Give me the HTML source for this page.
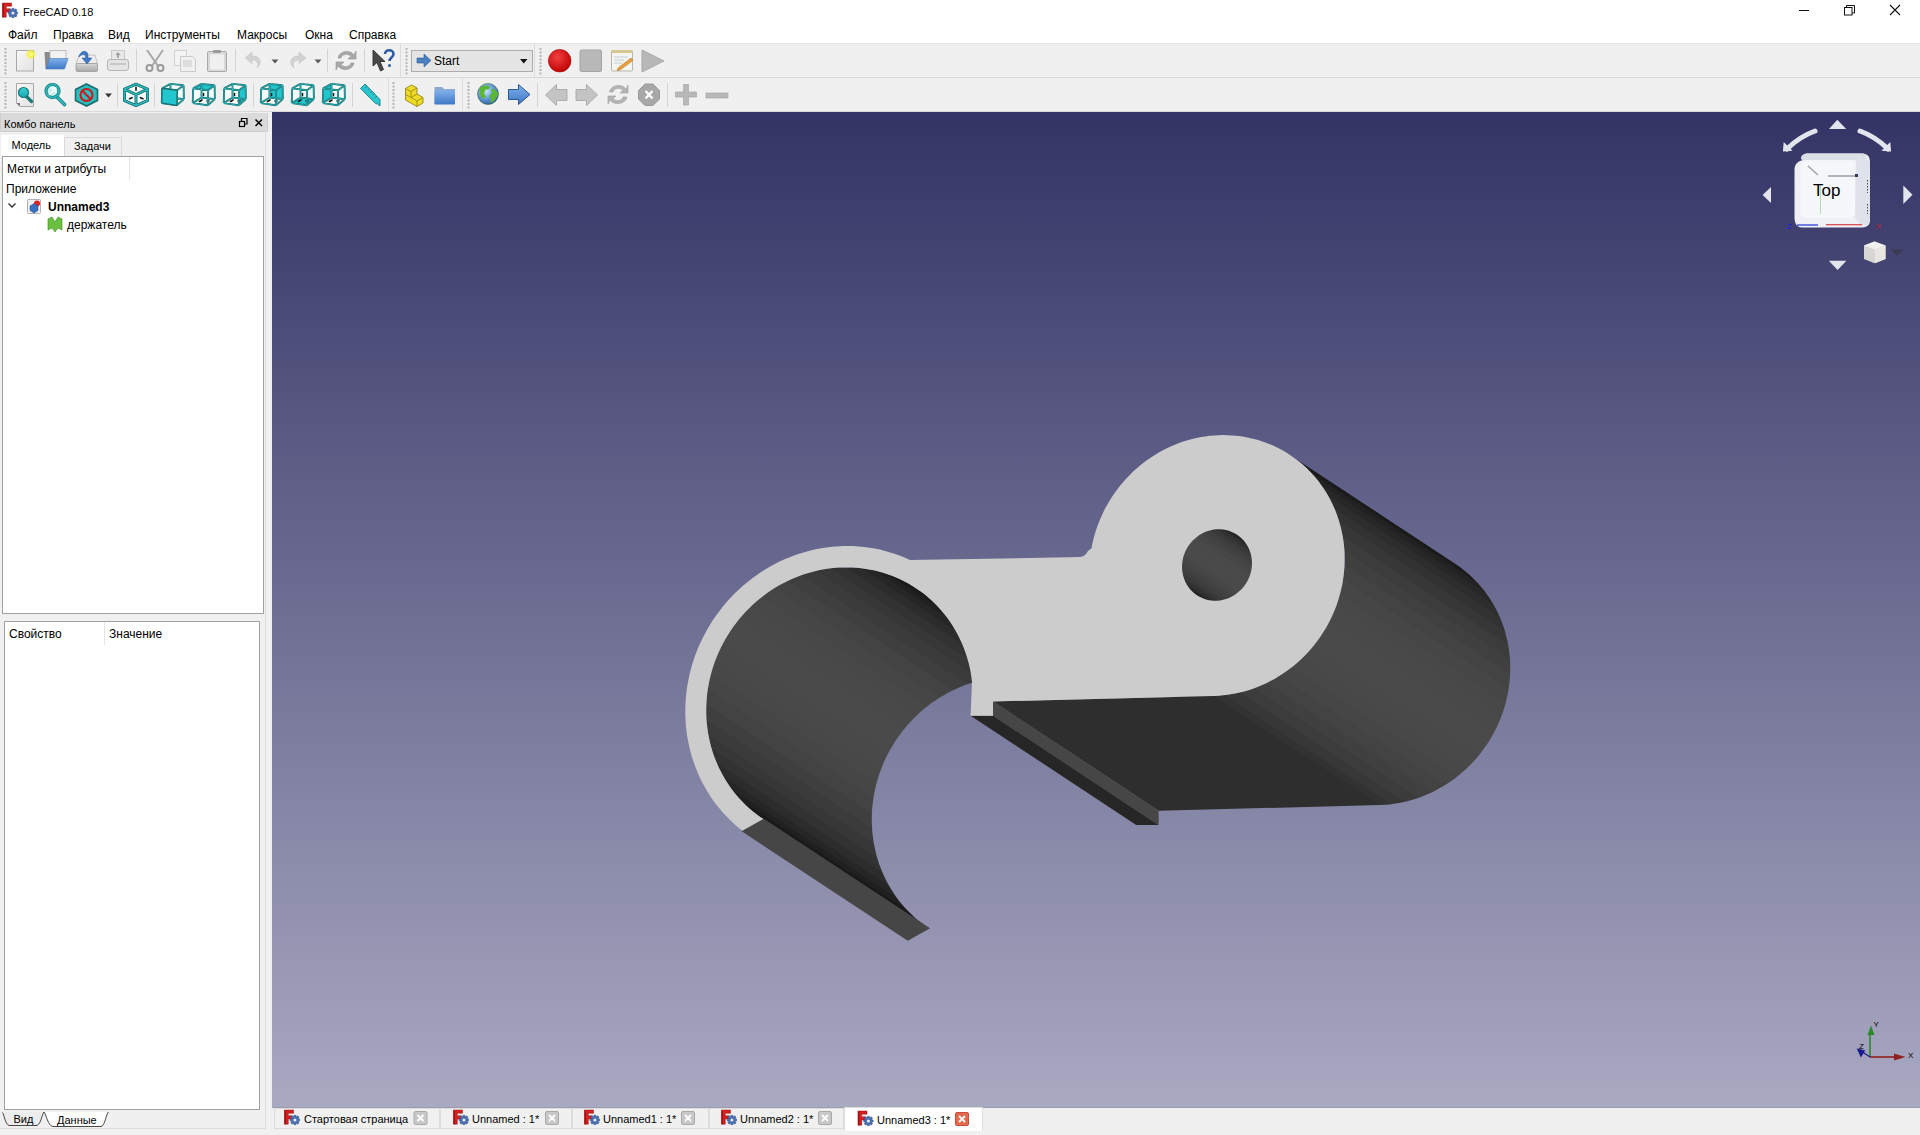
<!DOCTYPE html>
<html><head><meta charset="utf-8">
<style>
*{box-sizing:border-box;margin:0;padding:0}
html,body{width:1920px;height:1135px;overflow:hidden;background:#f0f0f0;font-family:"Liberation Sans",sans-serif;font-size:12px;color:#000}
.abs{position:absolute}
#title{left:0;top:0;width:1920px;height:43px;background:#fff}
.menu{position:absolute;top:27.5px;font-size:12px;line-height:14px;white-space:pre}
#tb{left:0;top:43px;width:1920px;height:69px;background:#f0f0f0}
.hl{position:absolute;height:1px}
.vl{position:absolute;width:1px}
.grip{position:absolute;width:3px;background:repeating-linear-gradient(#a8a8a8 0 2px,transparent 2px 4px)}
#vp{left:272px;top:112px;width:1648px;height:996px;background:linear-gradient(#333365,#a9a9c2)}
.txt{position:absolute;white-space:pre;line-height:14px}
.tab{position:absolute;top:1108px;height:20px;border:1px solid #dcdcdc;border-bottom:none;background:#f0f0f0}
</style></head><body>
<div id="title" class="abs"></div>
<div class="txt" style="left:23px;top:4.5px;font-size:11px">FreeCAD 0.18</div>
<div class="menu" style="left:8px">Файл</div>
<div class="menu" style="left:53px">Правка</div>
<div class="menu" style="left:108px">Вид</div>
<div class="menu" style="left:145px">Инструменты</div>
<div class="menu" style="left:237px">Макросы</div>
<div class="menu" style="left:305px">Окна</div>
<div class="menu" style="left:349px">Справка</div>

<div id="tb" class="abs"></div>
<div class="hl" style="left:0;top:43px;width:1920px;background:#e3e3e3"></div>
<div class="hl" style="left:0;top:77px;width:1920px;background:#d8d8d8"></div>
<div class="hl" style="left:0;top:111px;width:1920px;background:#d8d8d8"></div>

<svg width="1920" height="70" viewBox="0 42 1920 70" style="position:absolute;left:0;top:42px">
<defs><linearGradient id="gpage" x1="0" y1="0" x2="1" y2="1"><stop offset="0" stop-color="#f8f8f8"/><stop offset="1" stop-color="#e2e2e2"/></linearGradient><radialGradient id="gglow"><stop offset="0" stop-color="#ffffc0"/><stop offset="0.5" stop-color="#f4f040"/><stop offset="1" stop-color="#f4f040" stop-opacity="0"/></radialGradient><linearGradient id="gblue" x1="0" y1="0" x2="0" y2="1"><stop offset="0" stop-color="#7fb0ea"/><stop offset="1" stop-color="#3f78c8"/></linearGradient><linearGradient id="ggray" x1="0" y1="0" x2="0" y2="1"><stop offset="0" stop-color="#d8d8d8"/><stop offset="1" stop-color="#a8a8a8"/></linearGradient><radialGradient id="gred" cx="0.4" cy="0.35" r="0.7"><stop offset="0" stop-color="#f04040"/><stop offset="1" stop-color="#c00000"/></radialGradient><radialGradient id="gglobe" cx="0.4" cy="0.35" r="0.7"><stop offset="0" stop-color="#d0e8ff"/><stop offset="0.5" stop-color="#6aa0e0"/><stop offset="1" stop-color="#2a5aa0"/></radialGradient><linearGradient id="gteal" x1="0" y1="0" x2="0" y2="1"><stop offset="0" stop-color="#3ad0d8"/><stop offset="1" stop-color="#18a8b0"/></linearGradient></defs>
<rect x="4.5" y="48" width="2" height="2" fill="#b4b4b4"/><rect x="4.5" y="51.5" width="2" height="2" fill="#b4b4b4"/><rect x="4.5" y="55.0" width="2" height="2" fill="#b4b4b4"/><rect x="4.5" y="58.5" width="2" height="2" fill="#b4b4b4"/><rect x="4.5" y="62.0" width="2" height="2" fill="#b4b4b4"/><rect x="4.5" y="65.5" width="2" height="2" fill="#b4b4b4"/><rect x="4.5" y="69.0" width="2" height="2" fill="#b4b4b4"/><rect x="4.5" y="72.5" width="2" height="2" fill="#b4b4b4"/>
<rect x="4.5" y="82" width="2" height="2" fill="#b4b4b4"/><rect x="4.5" y="85.5" width="2" height="2" fill="#b4b4b4"/><rect x="4.5" y="89.0" width="2" height="2" fill="#b4b4b4"/><rect x="4.5" y="92.5" width="2" height="2" fill="#b4b4b4"/><rect x="4.5" y="96.0" width="2" height="2" fill="#b4b4b4"/><rect x="4.5" y="99.5" width="2" height="2" fill="#b4b4b4"/><rect x="4.5" y="103.0" width="2" height="2" fill="#b4b4b4"/><rect x="4.5" y="106.5" width="2" height="2" fill="#b4b4b4"/>
<rect x="405.5" y="48" width="2" height="2" fill="#b4b4b4"/><rect x="405.5" y="51.5" width="2" height="2" fill="#b4b4b4"/><rect x="405.5" y="55.0" width="2" height="2" fill="#b4b4b4"/><rect x="405.5" y="58.5" width="2" height="2" fill="#b4b4b4"/><rect x="405.5" y="62.0" width="2" height="2" fill="#b4b4b4"/><rect x="405.5" y="65.5" width="2" height="2" fill="#b4b4b4"/><rect x="405.5" y="69.0" width="2" height="2" fill="#b4b4b4"/><rect x="405.5" y="72.5" width="2" height="2" fill="#b4b4b4"/>
<rect x="539.5" y="48" width="2" height="2" fill="#b4b4b4"/><rect x="539.5" y="51.5" width="2" height="2" fill="#b4b4b4"/><rect x="539.5" y="55.0" width="2" height="2" fill="#b4b4b4"/><rect x="539.5" y="58.5" width="2" height="2" fill="#b4b4b4"/><rect x="539.5" y="62.0" width="2" height="2" fill="#b4b4b4"/><rect x="539.5" y="65.5" width="2" height="2" fill="#b4b4b4"/><rect x="539.5" y="69.0" width="2" height="2" fill="#b4b4b4"/><rect x="539.5" y="72.5" width="2" height="2" fill="#b4b4b4"/>
<rect x="392.5" y="82" width="2" height="2" fill="#b4b4b4"/><rect x="392.5" y="85.5" width="2" height="2" fill="#b4b4b4"/><rect x="392.5" y="89.0" width="2" height="2" fill="#b4b4b4"/><rect x="392.5" y="92.5" width="2" height="2" fill="#b4b4b4"/><rect x="392.5" y="96.0" width="2" height="2" fill="#b4b4b4"/><rect x="392.5" y="99.5" width="2" height="2" fill="#b4b4b4"/><rect x="392.5" y="103.0" width="2" height="2" fill="#b4b4b4"/><rect x="392.5" y="106.5" width="2" height="2" fill="#b4b4b4"/>
<rect x="467.5" y="82" width="2" height="2" fill="#b4b4b4"/><rect x="467.5" y="85.5" width="2" height="2" fill="#b4b4b4"/><rect x="467.5" y="89.0" width="2" height="2" fill="#b4b4b4"/><rect x="467.5" y="92.5" width="2" height="2" fill="#b4b4b4"/><rect x="467.5" y="96.0" width="2" height="2" fill="#b4b4b4"/><rect x="467.5" y="99.5" width="2" height="2" fill="#b4b4b4"/><rect x="467.5" y="103.0" width="2" height="2" fill="#b4b4b4"/><rect x="467.5" y="106.5" width="2" height="2" fill="#b4b4b4"/>
<rect x="400" y="44" width="1" height="33" fill="#dcdcdc"/>
<rect x="534" y="44" width="1" height="33" fill="#dcdcdc"/>
<rect x="388" y="78" width="1" height="33" fill="#dcdcdc"/>
<rect x="462" y="78" width="1" height="33" fill="#dcdcdc"/>
<rect x="136" y="49" width="1" height="23" fill="#d4d4d4"/>
<rect x="235" y="49" width="1" height="23" fill="#d4d4d4"/>
<rect x="327" y="49" width="1" height="23" fill="#d4d4d4"/>
<rect x="364" y="49" width="1" height="23" fill="#d4d4d4"/>
<rect x="117" y="83" width="1" height="24" fill="#d4d4d4"/>
<rect x="154" y="83" width="1" height="24" fill="#d4d4d4"/>
<rect x="253" y="83" width="1" height="24" fill="#d4d4d4"/>
<rect x="352" y="83" width="1" height="24" fill="#d4d4d4"/>
<rect x="537" y="83" width="1" height="24" fill="#d4d4d4"/>
<rect x="667" y="83" width="1" height="24" fill="#d4d4d4"/>
<rect x="16.5" y="50.5" width="17" height="20.5" fill="url(#gpage)" stroke="#a8a8a8"/>
<circle cx="30.8" cy="54.3" r="5.5" fill="url(#gglow)"/>
<path d="M44.5,52 h5 l1,2 v15 h-5 z" fill="#8a8a8a"/>
<rect x="50" y="50.5" width="16" height="9" fill="#f2f2f2" stroke="#b0b0b0" stroke-width="0.8"/>
<path d="M49.5,58.5 H68 L64.5,69 H46 Z" fill="url(#gblue)" stroke="#4a78b8" stroke-width="0.6"/>
<path d="M79,55 H95 L97.5,64 H76 Z" fill="#ececec" stroke="#b8b8b8" stroke-width="0.8"/>
<rect x="76" y="63.5" width="21.5" height="8" rx="1.5" fill="url(#ggray)" stroke="#9a9a9a" stroke-width="0.8"/>
<path d="M79,57 C80,51 86,49 88,54 V58 H92 L87,64 L82,58 H85.5 V56 C85,53.5 81,54 79,57 Z" fill="#3d78c4" stroke="#2a5a9c" stroke-width="0.5"/>
<rect x="111.5" y="50.5" width="13" height="9" fill="#e8e8e8" stroke="#c0c0c0" stroke-width="0.8"/>
<path d="M118,52 l-2.5,3 h1.7 v3 h1.6 v-3 h1.7 z" fill="#9a9a9a"/>
<rect x="107.5" y="59.5" width="21" height="11" rx="2.5" fill="#e4e4e4" stroke="#b0b0b0" stroke-width="0.9"/>
<rect x="110" y="63" width="16" height="2" fill="#c8c8c8"/>
<path d="M147,50 L158,66 M163,50 L152,66" stroke="#a8a8a8" stroke-width="2"/>
<circle cx="149.5" cy="68" r="3" fill="none" stroke="#9a9a9a" stroke-width="2"/><circle cx="160.5" cy="68" r="3" fill="none" stroke="#9a9a9a" stroke-width="2"/>
<rect x="174.5" y="50.5" width="12" height="15" fill="#f4f4f4" stroke="#d0d0d0"/>
<path d="M180.5,56.5 h12 l3,3 v12 h-15 z" fill="#f0f0f0" stroke="#cacaca"/>
<rect x="183" y="60" width="9" height="7" fill="#dedede"/>
<rect x="207.5" y="51.5" width="19" height="20" rx="1" fill="#d8d8d8" stroke="#a8a8a8"/>
<rect x="210" y="54.5" width="14" height="15" fill="#f0f0f0"/>
<rect x="213" y="50" width="8" height="3" rx="1" fill="#9a9a9a"/>
<path d="M252,52 L245,58 L252,63.5 V60 C256,60 259,62 257,68 C262,64 262,56 252,56 Z" fill="#d2d2d2" stroke="#c6c6c6" stroke-width="0.6"/>
<path d="M271.5,59.5 h7 l-3.5,4 z" fill="#5a5a5a"/>
<path d="M299,52 L306,58 L299,63.5 V60 C295,60 292,62 294,68 C289,64 289,56 299,56 Z" fill="#d2d2d2" stroke="#c6c6c6" stroke-width="0.6"/>
<path d="M314.5,59.5 h7 l-3.5,4 z" fill="#5a5a5a"/>
<path d="M338,58 C339,51 350,49 354,55 L356,51 V59 H348 L351,56.5 C348,53 342,54 341,58 Z M354,63 C353,70 342,72 338,66 L336,70 V62 H344 L341,64.5 C344,68 350,67 351,63 Z" fill="#a8a8a8" stroke="#909090" stroke-width="0.6"/>
<path d="M373,50 L373,66 L377,62.5 L380.5,71 L383.5,69.5 L380,61.5 L385,61.5 Z" fill="#4a4a4a" stroke="#222" stroke-width="0.8"/>
<path d="M385,54 C385,49 393.5,49 393.5,54 C393.5,57.5 389.5,57.5 389.5,61" stroke="#2a5aa8" stroke-width="2.6" fill="none"/><circle cx="389.5" cy="65.5" r="1.5" fill="#2a5aa8"/>
<rect x="411.5" y="50.5" width="121" height="21" fill="#e5e5e5" stroke="#adadad"/>
<path d="M417,58 H424 V54 L431,60.5 L424,67 V63 H417 Z" fill="#4a7fc0" stroke="#2d5a96" stroke-width="0.6"/>
<path d="M520,59 h7.5 l-3.75,4.5 z" fill="#111"/>
<circle cx="559.7" cy="60.7" r="11.3" fill="url(#gred)" stroke="#a00000" stroke-width="0.6"/>
<rect x="580" y="50" width="21.5" height="21.5" rx="1.5" fill="#b8b8b8" stroke="#a4a4a4"/>
<rect x="611.5" y="51" width="21" height="20" rx="1" fill="#f4f4f0" stroke="#b8b8b0"/><rect x="611.5" y="50" width="21" height="3" fill="#d4c890"/>
<path d="M614,57 h14 M614,60 h10 M614,63 h8" stroke="#b8c4d0" stroke-width="0.8"/>
<path d="M618,68 L631,58 L633,60.5 L620,70 L617,70.5 Z" fill="#e8a040" stroke="#b07020" stroke-width="0.5"/>
<path d="M642,50 V72 L664,61 Z" fill="#b8b8b8" stroke="#a8a8a8"/>
<path d="M16.5,83.5 H33.5 V106.5 H20 L16.5,103 Z" fill="url(#gpage)" stroke="#a8a8a8"/>
<path d="M16.5,103 L20,106.5 V103 Z" fill="#777"/>
<path d="M26,96 L31.5,101.5" stroke="#177a7a" stroke-width="3.2" stroke-linecap="round"/>
<circle cx="23.5" cy="92.5" r="5" fill="url(#gteal)" stroke="#177a7a" stroke-width="1.2"/>
<path d="M57,97 L64.5,104.5" stroke="#177a7a" stroke-width="3.6" stroke-linecap="round"/><path d="M57,97 L64.5,104.5" stroke="#2bbcc0" stroke-width="2" stroke-linecap="round"/>
<circle cx="52.5" cy="91" r="6.5" fill="#c8f0f0" stroke="#177a7a" stroke-width="3.2"/><circle cx="52.5" cy="91" r="6.5" fill="none" stroke="#2bbcc0" stroke-width="1.6"/>
<path d="M49,95 L54,90 M51,88 H55.5 V92.5" stroke="#fff" stroke-width="1.6" fill="none"/>
<polygon points="86.5,84 97.5,89.5 97.5,100.5 86.5,106 75.5,100.5 75.5,89.5" fill="#2bbcc0" stroke="#1b6c6c" stroke-width="1.6"/>
<circle cx="86.5" cy="95" r="6" fill="none" stroke="#d01818" stroke-width="2"/><path d="M82.5,91 L90.5,99" stroke="#d01818" stroke-width="2"/>
<path d="M105,93.5 h7 l-3.5,4 z" fill="#333"/>
<polygon points="136.0,84.2 147.5,89.2 147.5,100.7 136.0,105.7 124.5,100.7 124.5,89.2" fill="#f4fbfb"/><path d="M136.0,84.2L147.5,89.2L147.5,100.7L136.0,105.7L124.5,100.7L124.5,89.2Z M124.5,89.2L136.0,94.7L147.5,89.2 M136.0,94.7L136.0,105.7" stroke="#1b7474" stroke-width="3" fill="none" stroke-linejoin="round"/><path d="M136.0,84.2L147.5,89.2L147.5,100.7L136.0,105.7L124.5,100.7L124.5,89.2Z M124.5,89.2L136.0,94.7L147.5,89.2 M136.0,94.7L136.0,105.7" stroke="#2bb8bc" stroke-width="1.4" fill="none" stroke-linejoin="round"/><path d="M136.0,87.2v3M129.5,98.7l2.5,-1M140.5,97.7l2.5,1" stroke="#111" stroke-width="1.6" stroke-linecap="round"/>
<g><polygon points="162.1,88.4 170.5,83.9 183.6,85.3 183.9,99.1 176.8,105.3 161.8,103.1" fill="#f6fbfb"/><polygon points="162.1,88.4 177.1,90.3 176.8,105.3 161.8,103.1" fill="#22c6ce"/><path d="M162.1,88.4L177.1,90.3M177.1,90.3L176.8,105.3M176.8,105.3L161.8,103.1M161.8,103.1L162.1,88.4M170.5,83.9L183.6,85.3M183.6,85.3L183.9,99.1M183.9,99.1L170.5,97.5M170.5,97.5L170.5,83.9M162.1,88.4L170.5,83.9M177.1,90.3L183.6,85.3M176.8,105.3L183.9,99.1M161.8,103.1L170.5,97.5" stroke="#1b6e6e" stroke-width="1.9" fill="none" stroke-linejoin="round"/><path d="M162.1,88.4L177.1,90.3M177.1,90.3L176.8,105.3M176.8,105.3L161.8,103.1M161.8,103.1L162.1,88.4M170.5,83.9L183.6,85.3M183.6,85.3L183.9,99.1M183.9,99.1L170.5,97.5M170.5,97.5L170.5,83.9M162.1,88.4L170.5,83.9M177.1,90.3L183.6,85.3M176.8,105.3L183.9,99.1M161.8,103.1L170.5,97.5" stroke="#2cc0c4" stroke-width="0.7" fill="none" stroke-linejoin="round"/><polygon points="162.1,88.4 177.1,90.3 176.8,105.3 161.8,103.1" fill="#22c6ce" stroke="#1b6e6e" stroke-width="1.2" stroke-linejoin="round"/></g>
<g><polygon points="193.1,88.4 201.5,83.9 214.6,85.3 214.9,99.1 207.8,105.3 192.8,103.1" fill="#f6fbfb"/><polygon points="193.1,88.4 208.1,90.3 214.6,85.3 201.5,83.9" fill="#22c6ce"/><path d="M203.5,93.5v2M199.5,101.5l2.5,-1.5M207,101.0h2" stroke="#111" stroke-width="1.6" stroke-linecap="round"/><path d="M193.1,88.4L208.1,90.3M208.1,90.3L207.8,105.3M207.8,105.3L192.8,103.1M192.8,103.1L193.1,88.4M201.5,83.9L214.6,85.3M214.6,85.3L214.9,99.1M214.9,99.1L201.5,97.5M201.5,97.5L201.5,83.9M193.1,88.4L201.5,83.9M208.1,90.3L214.6,85.3M207.8,105.3L214.9,99.1M192.8,103.1L201.5,97.5" stroke="#1b6e6e" stroke-width="1.9" fill="none" stroke-linejoin="round"/><path d="M193.1,88.4L208.1,90.3M208.1,90.3L207.8,105.3M207.8,105.3L192.8,103.1M192.8,103.1L193.1,88.4M201.5,83.9L214.6,85.3M214.6,85.3L214.9,99.1M214.9,99.1L201.5,97.5M201.5,97.5L201.5,83.9M193.1,88.4L201.5,83.9M208.1,90.3L214.6,85.3M207.8,105.3L214.9,99.1M192.8,103.1L201.5,97.5" stroke="#2cc0c4" stroke-width="0.7" fill="none" stroke-linejoin="round"/></g>
<g><polygon points="224.1,88.4 232.5,83.9 245.6,85.3 245.9,99.1 238.8,105.3 223.8,103.1" fill="#f6fbfb"/><polygon points="239.1,90.3 245.6,85.3 245.9,99.1 238.8,105.3" fill="#22c6ce"/><path d="M234.5,93.5v2M230.5,101.5l2.5,-1.5M238,101.0h2" stroke="#111" stroke-width="1.6" stroke-linecap="round"/><path d="M224.1,88.4L239.1,90.3M239.1,90.3L238.8,105.3M238.8,105.3L223.8,103.1M223.8,103.1L224.1,88.4M232.5,83.9L245.6,85.3M245.6,85.3L245.9,99.1M245.9,99.1L232.5,97.5M232.5,97.5L232.5,83.9M224.1,88.4L232.5,83.9M239.1,90.3L245.6,85.3M238.8,105.3L245.9,99.1M223.8,103.1L232.5,97.5" stroke="#1b6e6e" stroke-width="1.9" fill="none" stroke-linejoin="round"/><path d="M224.1,88.4L239.1,90.3M239.1,90.3L238.8,105.3M238.8,105.3L223.8,103.1M223.8,103.1L224.1,88.4M232.5,83.9L245.6,85.3M245.6,85.3L245.9,99.1M245.9,99.1L232.5,97.5M232.5,97.5L232.5,83.9M224.1,88.4L232.5,83.9M239.1,90.3L245.6,85.3M238.8,105.3L245.9,99.1M223.8,103.1L232.5,97.5" stroke="#2cc0c4" stroke-width="0.7" fill="none" stroke-linejoin="round"/></g>
<g><polygon points="261.1,88.4 269.5,83.9 282.6,85.3 282.9,99.1 275.8,105.3 260.8,103.1" fill="#f6fbfb"/><polygon points="269.5,83.9 282.6,85.3 282.9,99.1 269.5,97.5" fill="#22c6ce"/><path d="M271.5,93.5v2M267.5,101.5l2.5,-1.5M275,101.0h2" stroke="#111" stroke-width="1.6" stroke-linecap="round"/><path d="M261.1,88.4L276.1,90.3M276.1,90.3L275.8,105.3M275.8,105.3L260.8,103.1M260.8,103.1L261.1,88.4M269.5,83.9L282.6,85.3M282.6,85.3L282.9,99.1M282.9,99.1L269.5,97.5M269.5,97.5L269.5,83.9M261.1,88.4L269.5,83.9M276.1,90.3L282.6,85.3M275.8,105.3L282.9,99.1M260.8,103.1L269.5,97.5" stroke="#1b6e6e" stroke-width="1.9" fill="none" stroke-linejoin="round"/><path d="M261.1,88.4L276.1,90.3M276.1,90.3L275.8,105.3M275.8,105.3L260.8,103.1M260.8,103.1L261.1,88.4M269.5,83.9L282.6,85.3M282.6,85.3L282.9,99.1M282.9,99.1L269.5,97.5M269.5,97.5L269.5,83.9M261.1,88.4L269.5,83.9M276.1,90.3L282.6,85.3M275.8,105.3L282.9,99.1M260.8,103.1L269.5,97.5" stroke="#2cc0c4" stroke-width="0.7" fill="none" stroke-linejoin="round"/></g>
<g><polygon points="292.1,88.4 300.5,83.9 313.6,85.3 313.9,99.1 306.8,105.3 291.8,103.1" fill="#f6fbfb"/><polygon points="291.8,103.1 306.8,105.3 313.9,99.1 300.5,97.5" fill="#22c6ce"/><path d="M302.5,93.5v2M298.5,101.5l2.5,-1.5M306,101.0h2" stroke="#111" stroke-width="1.6" stroke-linecap="round"/><path d="M292.1,88.4L307.1,90.3M307.1,90.3L306.8,105.3M306.8,105.3L291.8,103.1M291.8,103.1L292.1,88.4M300.5,83.9L313.6,85.3M313.6,85.3L313.9,99.1M313.9,99.1L300.5,97.5M300.5,97.5L300.5,83.9M292.1,88.4L300.5,83.9M307.1,90.3L313.6,85.3M306.8,105.3L313.9,99.1M291.8,103.1L300.5,97.5" stroke="#1b6e6e" stroke-width="1.9" fill="none" stroke-linejoin="round"/><path d="M292.1,88.4L307.1,90.3M307.1,90.3L306.8,105.3M306.8,105.3L291.8,103.1M291.8,103.1L292.1,88.4M300.5,83.9L313.6,85.3M313.6,85.3L313.9,99.1M313.9,99.1L300.5,97.5M300.5,97.5L300.5,83.9M292.1,88.4L300.5,83.9M307.1,90.3L313.6,85.3M306.8,105.3L313.9,99.1M291.8,103.1L300.5,97.5" stroke="#2cc0c4" stroke-width="0.7" fill="none" stroke-linejoin="round"/></g>
<g><polygon points="323.1,88.4 331.5,83.9 344.6,85.3 344.9,99.1 337.8,105.3 322.8,103.1" fill="#f6fbfb"/><polygon points="323.1,88.4 331.5,83.9 331.5,97.5 322.8,103.1" fill="#22c6ce"/><path d="M333.5,93.5v2M329.5,101.5l2.5,-1.5M337,101.0h2" stroke="#111" stroke-width="1.6" stroke-linecap="round"/><path d="M323.1,88.4L338.1,90.3M338.1,90.3L337.8,105.3M337.8,105.3L322.8,103.1M322.8,103.1L323.1,88.4M331.5,83.9L344.6,85.3M344.6,85.3L344.9,99.1M344.9,99.1L331.5,97.5M331.5,97.5L331.5,83.9M323.1,88.4L331.5,83.9M338.1,90.3L344.6,85.3M337.8,105.3L344.9,99.1M322.8,103.1L331.5,97.5" stroke="#1b6e6e" stroke-width="1.9" fill="none" stroke-linejoin="round"/><path d="M323.1,88.4L338.1,90.3M338.1,90.3L337.8,105.3M337.8,105.3L322.8,103.1M322.8,103.1L323.1,88.4M331.5,83.9L344.6,85.3M344.6,85.3L344.9,99.1M344.9,99.1L331.5,97.5M331.5,97.5L331.5,83.9M323.1,88.4L331.5,83.9M338.1,90.3L344.6,85.3M337.8,105.3L344.9,99.1M322.8,103.1L331.5,97.5" stroke="#2cc0c4" stroke-width="0.7" fill="none" stroke-linejoin="round"/></g>
<path d="M360.5,88.5 L365,84 L380,99.5 L380,106 L377.5,104 L375.5,103.5 Z" fill="#2cc4cc" stroke="#17808a" stroke-width="0.9"/>
<path d="M367,86 l-2,2 M369.5,88.5 l-1.5,1.5 M372,91 l-2,2 M374.5,93.5 l-1.5,1.5 M377,96 l-2,2" stroke="#17808a" stroke-width="0.8"/>
<path d="M405.5,88.5 L411.5,85 L417,88 V94 L423,97.5 V103 L417,106.5 L405.5,100 Z" fill="#ecdc28" stroke="#8a7a10" stroke-width="0.8"/>
<path d="M405.5,88.5 L411,91.5 L417,88 M411,91.5 V97 M405.5,94.5 L411,97.5 L417,94 M411,97.5 L417,101 L423,97.5 M417,101 V106.5" stroke="#8a7a10" stroke-width="0.7" fill="none"/>
<path d="M434.5,87 H442 L444,89 H455 V104 H434.5 Z" fill="#8aa8d0"/>
<rect x="434.5" y="90.5" width="20.5" height="14" rx="0.8" fill="url(#gblue)"/>
<circle cx="488" cy="94" r="10.5" fill="url(#gglobe)" stroke="#3a6a30" stroke-width="0.6"/>
<path d="M480,88 C483,85 488,85 490,87 L488,90 L486,89 L484,93 L486,97 L483,99 C480,97 479,92 480,88 Z M491,89 C494,88 497,91 498,94 C497,98 494,102 490,103 L491,99 L489,96 L492,93 Z" fill="#5cb832"/>
<path d="M508.5,89.5 H518.5 V84.5 L530,94.5 L518.5,104.5 V99.5 H508.5 Z" fill="url(#gblue)" stroke="#1e4a8a" stroke-width="0.9"/>
<path d="M567,89.5 H556.5 V84.5 L545.5,95 L556.5,105.5 V100.5 H567 Z" fill="#c4c4c4" stroke="#a8a8a8" stroke-width="0.9"/>
<path d="M576,89.5 H586.5 V84.5 L597.5,95 L586.5,105.5 V100.5 H576 Z" fill="#c4c4c4" stroke="#a8a8a8" stroke-width="0.9"/>
<path d="M609.5,92 C610.5,85 622,83 626,89 L628,85 V93 H620 L623,90.5 C620,87 614,88 613,92 Z M627,97 C626,104 614,106 610,100 L608,104 V96 H616 L613,98.5 C616,102 622,101 623,97 Z" fill="#b4b4b4" stroke="#a0a0a0" stroke-width="0.6"/>
<polygon points="645,84 653,84 659.5,90.5 659.5,99 653,105.5 645,105.5 638.5,99 638.5,90.5" fill="#a8a8a8" stroke="#9a9a9a"/>
<path d="M645.5,91 L652.5,98.5 M652.5,91 L645.5,98.5" stroke="#fff" stroke-width="2.4"/>
<path d="M683.5,84.5 h5 v7.5 h8 v5 h-8 v8 h-5 v-8 h-8 v-5 h8 z" fill="#b8b8b8" stroke="#a0a0a0" stroke-width="0.6"/>
<rect x="706" y="93" width="22" height="5" fill="#b8b8b8" stroke="#a0a0a0" stroke-width="0.6"/>
</svg>
<div class="txt" style="left:434px;top:54px">Start</div>
<!-- left panel -->
<div class="abs" style="left:0;top:113px;width:268px;height:19px;background:#dadada;border:1px solid #cdcdcd;border-top:none"></div>
<div class="txt" style="left:4px;top:117px;font-size:11px">Комбо панель</div>
<div class="abs" style="left:1px;top:135px;width:63px;height:21px;background:#fff"></div>
<div class="abs" style="left:64px;top:137px;width:58px;height:19px;background:#f0f0f0;border:1px solid #d9d9d9;border-bottom:none"></div>
<div class="txt" style="left:11.5px;top:138px;font-size:11px">Модель</div>
<div class="txt" style="left:74px;top:139px;font-size:11px">Задачи</div>
<div class="abs" style="left:2px;top:156px;width:262px;height:458px;background:#fff;border:1px solid #a0a0a0"></div>
<div class="vl" style="left:129px;top:157px;height:23px;background:#e5e5e5"></div>
<div class="txt" style="left:7px;top:162px">Метки и атрибуты</div>
<div class="txt" style="left:6px;top:182px">Приложение</div>
<div class="txt" style="left:48px;top:200px;font-weight:bold">Unnamed3</div>
<div class="txt" style="left:67px;top:218px">держатель</div>
<div class="abs" style="left:4px;top:621px;width:256px;height:489px;background:#fff;border:1px solid #a0a0a0"></div>
<div class="vl" style="left:104px;top:622px;height:23px;background:#e5e5e5"></div>
<div class="txt" style="left:9px;top:627px">Свойство</div>
<div class="txt" style="left:109px;top:627px">Значение</div>
<div class="vl" style="left:265px;top:113px;height:1016px;background:#dcdcdc"></div>
<div class="hl" style="left:0;top:1128px;width:266px;background:#dcdcdc"></div>

<div id="vp" class="abs"></div>
<svg width="1648" height="996" viewBox="272 112 1648 996" style="position:absolute;left:272px;top:112px">
<defs><linearGradient id="gin" gradientUnits="userSpaceOnUse" x1="763.3" y1="819.1" x2="915.7" y2="588.1"><stop offset="0.0000" stop-color="rgb(19,19,19)"/><stop offset="0.0031" stop-color="rgb(19,19,19)"/><stop offset="0.0031" stop-color="rgb(26,26,26)"/><stop offset="0.0125" stop-color="rgb(26,26,26)"/><stop offset="0.0125" stop-color="rgb(32,32,32)"/><stop offset="0.0281" stop-color="rgb(32,32,32)"/><stop offset="0.0281" stop-color="rgb(38,38,38)"/><stop offset="0.0495" stop-color="rgb(38,38,38)"/><stop offset="0.0495" stop-color="rgb(44,44,44)"/><stop offset="0.0766" stop-color="rgb(44,44,44)"/><stop offset="0.0766" stop-color="rgb(50,50,50)"/><stop offset="0.1091" stop-color="rgb(50,50,50)"/><stop offset="0.1091" stop-color="rgb(55,55,55)"/><stop offset="0.1464" stop-color="rgb(55,55,55)"/><stop offset="0.1464" stop-color="rgb(59,59,59)"/><stop offset="0.1883" stop-color="rgb(59,59,59)"/><stop offset="0.1883" stop-color="rgb(63,63,63)"/><stop offset="0.2340" stop-color="rgb(63,63,63)"/><stop offset="0.2340" stop-color="rgb(67,67,67)"/><stop offset="0.2831" stop-color="rgb(67,67,67)"/><stop offset="0.2831" stop-color="rgb(70,70,70)"/><stop offset="0.3349" stop-color="rgb(70,70,70)"/><stop offset="0.3349" stop-color="rgb(72,72,72)"/><stop offset="0.3887" stop-color="rgb(72,72,72)"/><stop offset="0.3887" stop-color="rgb(73,73,73)"/><stop offset="0.4440" stop-color="rgb(73,73,73)"/><stop offset="0.4440" stop-color="rgb(74,74,74)"/><stop offset="0.5000" stop-color="rgb(74,74,74)"/><stop offset="0.5000" stop-color="rgb(74,74,74)"/><stop offset="0.5560" stop-color="rgb(74,74,74)"/><stop offset="0.5560" stop-color="rgb(73,73,73)"/><stop offset="0.6113" stop-color="rgb(73,73,73)"/><stop offset="0.6113" stop-color="rgb(72,72,72)"/><stop offset="0.6651" stop-color="rgb(72,72,72)"/><stop offset="0.6651" stop-color="rgb(70,70,70)"/><stop offset="0.7169" stop-color="rgb(70,70,70)"/><stop offset="0.7169" stop-color="rgb(67,67,67)"/><stop offset="0.7660" stop-color="rgb(67,67,67)"/><stop offset="0.7660" stop-color="rgb(63,63,63)"/><stop offset="0.8117" stop-color="rgb(63,63,63)"/><stop offset="0.8117" stop-color="rgb(59,59,59)"/><stop offset="0.8536" stop-color="rgb(59,59,59)"/><stop offset="0.8536" stop-color="rgb(55,55,55)"/><stop offset="0.8909" stop-color="rgb(55,55,55)"/><stop offset="0.8909" stop-color="rgb(50,50,50)"/><stop offset="0.9234" stop-color="rgb(50,50,50)"/><stop offset="0.9234" stop-color="rgb(44,44,44)"/><stop offset="0.9505" stop-color="rgb(44,44,44)"/><stop offset="0.9505" stop-color="rgb(38,38,38)"/><stop offset="0.9719" stop-color="rgb(38,38,38)"/><stop offset="0.9719" stop-color="rgb(32,32,32)"/><stop offset="0.9875" stop-color="rgb(32,32,32)"/><stop offset="0.9875" stop-color="rgb(26,26,26)"/><stop offset="0.9969" stop-color="rgb(26,26,26)"/><stop offset="0.9969" stop-color="rgb(19,19,19)"/><stop offset="1.0000" stop-color="rgb(19,19,19)"/></linearGradient><linearGradient id="gcyl" gradientUnits="userSpaceOnUse" x1="1144.1" y1="676.1" x2="1289.9" y2="454.9"><stop offset="0.0000" stop-color="rgb(21,21,21)"/><stop offset="0.0031" stop-color="rgb(21,21,21)"/><stop offset="0.0031" stop-color="rgb(27,27,27)"/><stop offset="0.0125" stop-color="rgb(27,27,27)"/><stop offset="0.0125" stop-color="rgb(34,34,34)"/><stop offset="0.0281" stop-color="rgb(34,34,34)"/><stop offset="0.0281" stop-color="rgb(39,39,39)"/><stop offset="0.0495" stop-color="rgb(39,39,39)"/><stop offset="0.0495" stop-color="rgb(45,45,45)"/><stop offset="0.0766" stop-color="rgb(45,45,45)"/><stop offset="0.0766" stop-color="rgb(50,50,50)"/><stop offset="0.1091" stop-color="rgb(50,50,50)"/><stop offset="0.1091" stop-color="rgb(55,55,55)"/><stop offset="0.1464" stop-color="rgb(55,55,55)"/><stop offset="0.1464" stop-color="rgb(60,60,60)"/><stop offset="0.1883" stop-color="rgb(60,60,60)"/><stop offset="0.1883" stop-color="rgb(64,64,64)"/><stop offset="0.2340" stop-color="rgb(64,64,64)"/><stop offset="0.2340" stop-color="rgb(67,67,67)"/><stop offset="0.2831" stop-color="rgb(67,67,67)"/><stop offset="0.2831" stop-color="rgb(70,70,70)"/><stop offset="0.3349" stop-color="rgb(70,70,70)"/><stop offset="0.3349" stop-color="rgb(72,72,72)"/><stop offset="0.3887" stop-color="rgb(72,72,72)"/><stop offset="0.3887" stop-color="rgb(73,73,73)"/><stop offset="0.4440" stop-color="rgb(73,73,73)"/><stop offset="0.4440" stop-color="rgb(74,74,74)"/><stop offset="0.5000" stop-color="rgb(74,74,74)"/><stop offset="0.5000" stop-color="rgb(74,74,74)"/><stop offset="0.5560" stop-color="rgb(74,74,74)"/><stop offset="0.5560" stop-color="rgb(73,73,73)"/><stop offset="0.6113" stop-color="rgb(73,73,73)"/><stop offset="0.6113" stop-color="rgb(72,72,72)"/><stop offset="0.6651" stop-color="rgb(72,72,72)"/><stop offset="0.6651" stop-color="rgb(70,70,70)"/><stop offset="0.7169" stop-color="rgb(70,70,70)"/><stop offset="0.7169" stop-color="rgb(67,67,67)"/><stop offset="0.7660" stop-color="rgb(67,67,67)"/><stop offset="0.7660" stop-color="rgb(64,64,64)"/><stop offset="0.8117" stop-color="rgb(64,64,64)"/><stop offset="0.8117" stop-color="rgb(60,60,60)"/><stop offset="0.8536" stop-color="rgb(60,60,60)"/><stop offset="0.8536" stop-color="rgb(55,55,55)"/><stop offset="0.8909" stop-color="rgb(55,55,55)"/><stop offset="0.8909" stop-color="rgb(50,50,50)"/><stop offset="0.9234" stop-color="rgb(50,50,50)"/><stop offset="0.9234" stop-color="rgb(45,45,45)"/><stop offset="0.9505" stop-color="rgb(45,45,45)"/><stop offset="0.9505" stop-color="rgb(39,39,39)"/><stop offset="0.9719" stop-color="rgb(39,39,39)"/><stop offset="0.9719" stop-color="rgb(34,34,34)"/><stop offset="0.9875" stop-color="rgb(34,34,34)"/><stop offset="0.9875" stop-color="rgb(27,27,27)"/><stop offset="0.9969" stop-color="rgb(27,27,27)"/><stop offset="0.9969" stop-color="rgb(21,21,21)"/><stop offset="1.0000" stop-color="rgb(21,21,21)"/></linearGradient><linearGradient id="ghole" gradientUnits="userSpaceOnUse" x1="1197.0" y1="595.3" x2="1237.0" y2="534.7"><stop offset="0.0000" stop-color="rgb(26,26,26)"/><stop offset="0.0062" stop-color="rgb(26,26,26)"/><stop offset="0.0062" stop-color="rgb(34,34,34)"/><stop offset="0.0245" stop-color="rgb(34,34,34)"/><stop offset="0.0245" stop-color="rgb(42,42,42)"/><stop offset="0.0545" stop-color="rgb(42,42,42)"/><stop offset="0.0545" stop-color="rgb(49,49,49)"/><stop offset="0.0955" stop-color="rgb(49,49,49)"/><stop offset="0.0955" stop-color="rgb(56,56,56)"/><stop offset="0.1464" stop-color="rgb(56,56,56)"/><stop offset="0.1464" stop-color="rgb(62,62,62)"/><stop offset="0.2061" stop-color="rgb(62,62,62)"/><stop offset="0.2061" stop-color="rgb(66,66,66)"/><stop offset="0.2730" stop-color="rgb(66,66,66)"/><stop offset="0.2730" stop-color="rgb(70,70,70)"/><stop offset="0.3455" stop-color="rgb(70,70,70)"/><stop offset="0.3455" stop-color="rgb(73,73,73)"/><stop offset="0.4218" stop-color="rgb(73,73,73)"/><stop offset="0.4218" stop-color="rgb(74,74,74)"/><stop offset="0.5000" stop-color="rgb(74,74,74)"/><stop offset="0.5000" stop-color="rgb(74,74,74)"/><stop offset="0.5782" stop-color="rgb(74,74,74)"/><stop offset="0.5782" stop-color="rgb(73,73,73)"/><stop offset="0.6545" stop-color="rgb(73,73,73)"/><stop offset="0.6545" stop-color="rgb(70,70,70)"/><stop offset="0.7270" stop-color="rgb(70,70,70)"/><stop offset="0.7270" stop-color="rgb(66,66,66)"/><stop offset="0.7939" stop-color="rgb(66,66,66)"/><stop offset="0.7939" stop-color="rgb(62,62,62)"/><stop offset="0.8536" stop-color="rgb(62,62,62)"/><stop offset="0.8536" stop-color="rgb(56,56,56)"/><stop offset="0.9045" stop-color="rgb(56,56,56)"/><stop offset="0.9045" stop-color="rgb(49,49,49)"/><stop offset="0.9455" stop-color="rgb(49,49,49)"/><stop offset="0.9455" stop-color="rgb(42,42,42)"/><stop offset="0.9755" stop-color="rgb(42,42,42)"/><stop offset="0.9755" stop-color="rgb(34,34,34)"/><stop offset="0.9938" stop-color="rgb(34,34,34)"/><stop offset="0.9938" stop-color="rgb(26,26,26)"/><stop offset="1.0000" stop-color="rgb(26,26,26)"/></linearGradient></defs>
<polygon fill="url(#gin)" points="763.3,819.1 759.5,816.6 755.9,813.8 752.3,811.0 748.8,808.0 745.5,804.9 742.2,801.6 739.1,798.3 736.1,794.8 733.2,791.2 730.5,787.5 727.9,783.7 725.4,779.8 723.1,775.8 720.9,771.7 718.8,767.6 716.9,763.3 715.2,759.0 713.5,754.7 712.1,750.2 710.8,745.7 709.7,741.2 708.7,736.6 707.9,732.0 707.2,727.3 706.7,722.6 706.4,717.9 706.2,713.1 706.2,708.4 706.3,703.6 706.6,698.9 707.1,694.1 707.8,689.4 708.6,684.7 709.5,680.0 710.6,675.3 711.9,670.7 713.3,666.1 714.9,661.5 716.6,657.0 718.5,652.6 720.5,648.2 722.7,643.9 725.0,639.7 727.5,635.5 730.1,631.4 732.8,627.5 735.7,623.6 738.6,619.8 741.8,616.1 745.0,612.5 748.3,609.0 751.8,605.6 755.3,602.4 759.0,599.3 762.7,596.3 766.6,593.4 770.5,590.7 774.6,588.1 778.7,585.7 782.8,583.3 787.1,581.2 791.4,579.2 795.8,577.3 800.2,575.6 804.7,574.1 809.2,572.7 813.7,571.4 818.3,570.4 822.9,569.5 827.5,568.7 832.2,568.1 836.8,567.7 841.5,567.5 846.1,567.4 850.8,567.5 855.4,567.7 860.0,568.1 864.6,568.7 869.2,569.4 873.7,570.3 878.1,571.4 882.6,572.6 887.0,574.0 891.3,575.6 895.5,577.3 899.7,579.1 903.8,581.2 907.9,583.3 911.8,585.6 915.7,588.1 1081.3,697.3 1077.4,694.8 1073.5,692.5 1069.4,690.4 1065.3,688.3 1061.1,686.5 1056.9,684.8 1052.6,683.2 1048.2,681.8 1043.7,680.6 1039.3,679.5 1034.8,678.6 1030.2,677.9 1025.6,677.3 1021.0,676.9 1016.4,676.7 1011.7,676.6 1007.1,676.7 1002.4,676.9 997.8,677.3 993.1,677.9 988.5,678.7 983.9,679.6 979.3,680.6 974.8,681.9 970.3,683.3 965.8,684.8 961.4,686.5 957.0,688.4 952.7,690.4 948.4,692.5 944.3,694.9 940.2,697.3 936.1,699.9 932.2,702.6 928.3,705.5 924.6,708.5 920.9,711.6 917.4,714.8 913.9,718.2 910.6,721.7 907.4,725.3 904.2,729.0 901.3,732.8 898.4,736.7 895.7,740.6 893.1,744.7 890.6,748.9 888.3,753.1 886.1,757.4 884.1,761.8 882.2,766.2 880.5,770.7 878.9,775.3 877.5,779.9 876.2,784.5 875.1,789.2 874.2,793.9 873.4,798.6 872.7,803.3 872.2,808.1 871.9,812.8 871.8,817.6 871.8,822.3 872.0,827.1 872.3,831.8 872.8,836.5 873.5,841.2 874.3,845.8 875.3,850.4 876.4,854.9 877.7,859.4 879.1,863.9 880.8,868.2 882.5,872.5 884.4,876.8 886.5,880.9 888.7,885.0 891.0,889.0 893.5,892.9 896.1,896.7 898.8,900.4 901.7,904.0 904.7,907.5 907.8,910.8 911.1,914.1 914.4,917.2 917.9,920.2 921.5,923.0 925.1,925.8 928.9,928.3"/>
<polygon fill="#464646" stroke="#464646" stroke-width="1.2" points="742.2,830.9 763.3,819.1 928.9,928.3 907.8,940.1"/>
<polygon fill="url(#gcyl)" points="1289.9,454.9 1293.6,457.4 1297.1,460.0 1300.5,462.7 1303.8,465.6 1307.0,468.6 1310.1,471.7 1313.1,474.9 1316.0,478.2 1318.7,481.6 1321.4,485.2 1323.9,488.8 1326.2,492.5 1328.5,496.4 1330.6,500.3 1332.5,504.2 1334.4,508.3 1336.0,512.4 1337.6,516.6 1339.0,520.9 1340.2,525.2 1341.3,529.5 1342.2,533.9 1343.0,538.3 1343.7,542.8 1344.1,547.3 1344.5,551.8 1344.6,556.4 1344.6,560.9 1344.5,565.5 1344.2,570.0 1343.7,574.6 1343.1,579.1 1342.4,583.6 1341.4,588.1 1340.4,592.6 1339.2,597.0 1337.8,601.4 1336.3,605.8 1334.6,610.1 1332.8,614.3 1330.9,618.5 1328.8,622.6 1326.6,626.7 1324.2,630.7 1321.8,634.6 1319.1,638.4 1316.4,642.1 1313.6,645.8 1310.6,649.3 1307.5,652.7 1304.3,656.1 1301.0,659.3 1297.6,662.4 1294.1,665.4 1290.5,668.2 1286.8,671.0 1283.0,673.6 1279.2,676.1 1275.2,678.4 1271.2,680.6 1267.2,682.7 1263.1,684.6 1258.9,686.4 1254.6,688.0 1250.4,689.5 1246.0,690.8 1241.7,692.0 1237.3,693.1 1232.9,693.9 1228.5,694.6 1224.0,695.2 1219.6,695.6 1215.1,695.8 1210.7,695.9 1206.2,695.8 1201.8,695.6 1197.4,695.2 1193.0,694.6 1188.6,693.9 1184.3,693.1 1180.0,692.0 1175.8,690.9 1171.6,689.5 1167.4,688.1 1163.4,686.4 1159.3,684.7 1155.4,682.7 1151.5,680.7 1147.8,678.5 1144.1,676.1 1309.7,785.3 1313.4,787.7 1317.1,789.9 1321.0,791.9 1324.9,793.9 1329.0,795.6 1333.0,797.3 1337.2,798.7 1341.4,800.1 1345.6,801.2 1349.9,802.3 1354.2,803.1 1358.6,803.8 1363.0,804.4 1367.4,804.8 1371.8,805.0 1376.3,805.1 1380.7,805.0 1385.2,804.8 1389.6,804.4 1394.1,803.8 1398.5,803.1 1402.9,802.3 1407.3,801.2 1411.6,800.0 1416.0,798.7 1420.2,797.2 1424.5,795.6 1428.7,793.8 1432.8,791.9 1436.8,789.8 1440.8,787.6 1444.8,785.3 1448.6,782.8 1452.4,780.2 1456.1,777.4 1459.7,774.6 1463.2,771.6 1466.6,768.5 1469.9,765.3 1473.1,761.9 1476.2,758.5 1479.2,755.0 1482.0,751.3 1484.7,747.6 1487.4,743.8 1489.8,739.9 1492.2,735.9 1494.4,731.8 1496.5,727.7 1498.4,723.5 1500.2,719.3 1501.9,715.0 1503.4,710.6 1504.8,706.2 1506.0,701.8 1507.0,697.3 1508.0,692.8 1508.7,688.3 1509.3,683.8 1509.8,679.2 1510.1,674.7 1510.2,670.1 1510.2,665.6 1510.1,661.0 1509.7,656.5 1509.3,652.0 1508.6,647.5 1507.8,643.1 1506.9,638.7 1505.8,634.4 1504.6,630.1 1503.2,625.8 1501.6,621.6 1500.0,617.5 1498.1,613.4 1496.2,609.5 1494.1,605.6 1491.8,601.7 1489.5,598.0 1487.0,594.4 1484.3,590.8 1481.6,587.4 1478.7,584.1 1475.7,580.9 1472.6,577.8 1469.4,574.8 1466.1,571.9 1462.7,569.2 1459.2,566.6 1455.5,564.1"/>
<polygon fill="#2e2e2e" points="993.0,701.5 1213.9,695.9 1379.5,805.1 1158.6,810.7"/>
<polygon fill="#464646" points="993.0,701.5 993.0,715.7 1158.6,824.9 1158.6,810.7"/>
<polygon fill="#262626" points="970.6,715.7 993.0,715.7 1158.6,824.9 1136.2,824.9"/>
<polygon fill="#cccccc" points="742.3,830.8 738.2,827.4 734.2,824.0 730.3,820.3 726.6,816.6 723.0,812.7 719.5,808.6 716.2,804.5 713.0,800.2 710.0,795.8 707.2,791.2 704.5,786.6 702.0,781.9 699.6,777.1 697.4,772.1 695.4,767.1 693.6,762.1 691.9,756.9 690.5,751.7 689.2,746.4 688.1,741.1 687.1,735.8 686.4,730.3 685.8,724.9 685.5,719.4 685.3,714.0 685.3,708.5 685.5,703.0 685.9,697.5 686.4,692.0 687.2,686.5 688.2,681.0 689.3,675.6 690.6,670.2 692.1,664.8 693.8,659.5 695.6,654.3 697.6,649.1 699.8,643.9 702.2,638.9 704.8,633.9 707.5,629.0 710.3,624.2 713.3,619.5 716.5,614.9 719.9,610.4 723.3,606.0 726.9,601.8 730.7,597.6 734.6,593.6 738.6,589.7 742.7,586.0 747.0,582.4 751.3,579.0 755.8,575.7 760.4,572.5 765.1,569.6 769.8,566.8 774.7,564.1 779.6,561.6 784.6,559.3 789.7,557.2 794.8,555.3 800.0,553.5 805.2,551.9 810.5,550.5 815.8,549.3 821.1,548.3 826.5,547.4 831.9,546.8 837.2,546.4 842.6,546.1 848.0,546.0 853.4,546.1 858.7,546.5 864.1,547.0 869.4,547.7 874.6,548.6 879.9,549.6 885.0,550.9 890.2,552.4 895.2,554.0 900.2,555.8 905.1,557.8 910.0,560.0 1080.3,557.1 1083.6,555.9 1086.2,553.8 1088.0,551.0 1091.5,548.3 1092.4,543.8 1093.4,539.3 1094.6,534.8 1095.9,530.4 1097.4,526.0 1099.1,521.7 1100.9,517.4 1102.8,513.2 1104.8,509.0 1107.1,504.9 1109.4,500.9 1111.9,497.0 1114.5,493.2 1117.2,489.4 1120.0,485.7 1123.0,482.2 1126.1,478.7 1129.3,475.4 1132.6,472.1 1136.0,469.0 1139.5,466.0 1143.1,463.1 1146.8,460.3 1150.6,457.7 1154.4,455.2 1158.4,452.8 1162.4,450.6 1166.4,448.5 1170.6,446.5 1174.8,444.7 1179.0,443.1 1183.3,441.6 1187.6,440.2 1192.0,439.1 1196.4,438.0 1200.8,437.1 1205.3,436.4 1209.7,435.8 1214.2,435.4 1218.7,435.2 1223.1,435.1 1227.6,435.2 1232.1,435.4 1236.5,435.8 1240.9,436.3 1245.3,437.0 1249.6,437.9 1253.9,438.9 1258.2,440.1 1262.4,441.4 1266.5,442.9 1270.6,444.6 1274.6,446.3 1278.6,448.3 1282.5,450.3 1286.3,452.6 1290.0,454.9 1293.6,457.4 1297.1,460.0 1300.6,462.8 1303.9,465.6 1307.1,468.6 1310.2,471.8 1313.2,475.0 1316.1,478.3 1318.9,481.8 1321.5,485.4 1324.0,489.0 1326.4,492.7 1328.6,496.6 1330.7,500.5 1332.7,504.5 1334.5,508.6 1336.2,512.7 1337.7,516.9 1339.1,521.2 1340.3,525.5 1341.4,529.9 1342.3,534.3 1343.1,538.8 1343.7,543.3 1344.2,547.8 1344.5,552.3 1344.6,556.9 1344.6,561.4 1344.5,566.0 1344.1,570.6 1343.7,575.1 1343.0,579.7 1342.3,584.2 1341.3,588.7 1340.2,593.2 1339.0,597.6 1337.6,602.0 1336.1,606.4 1334.4,610.7 1332.5,615.0 1330.6,619.2 1328.5,623.3 1326.2,627.4 1323.8,631.3 1321.3,635.2 1318.7,639.1 1315.9,642.8 1313.0,646.4 1310.0,650.0 1306.9,653.4 1303.7,656.7 1300.3,659.9 1296.9,663.0 1293.4,666.0 1289.7,668.8 1286.0,671.6 1282.2,674.1 1278.3,676.6 1274.4,678.9 1270.3,681.1 1266.2,683.2 1262.1,685.1 1257.9,686.8 1253.6,688.4 1249.3,689.9 1245.0,691.2 1240.6,692.3 1236.2,693.3 1231.7,694.1 1227.3,694.8 1222.8,695.3 1218.4,695.7 1213.9,695.9 993.0,701.5 993.0,715.7 970.6,715.7 972.0,681.9 971.4,677.2 970.7,672.5 969.8,667.9 968.7,663.3 967.4,658.8 966.0,654.3 964.5,649.9 962.8,645.5 960.9,641.2 958.9,637.0 956.8,632.9 954.5,628.9 952.1,624.9 949.5,621.1 946.8,617.3 943.9,613.7 941.0,610.2 937.9,606.8 934.7,603.5 931.3,600.3 927.9,597.2 924.4,594.3 920.7,591.5 916.9,588.9 913.1,586.4 909.2,584.0 905.1,581.8 901.0,579.8 896.8,577.8 892.6,576.1 888.3,574.5 883.9,573.0 879.5,571.8 875.0,570.6 870.5,569.7 865.9,568.9 861.3,568.3 856.7,567.8 852.0,567.5 847.4,567.4 842.7,567.4 838.1,567.6 833.4,568.0 828.7,568.5 824.1,569.3 819.4,570.1 814.8,571.2 810.3,572.4 805.7,573.7 801.2,575.2 796.8,576.9 792.4,578.7 788.0,580.7 783.8,582.9 779.6,585.1 775.4,587.6 771.4,590.1 767.4,592.8 763.5,595.7 759.7,598.7 756.0,601.8 752.4,605.0 749.0,608.4 745.6,611.8 742.3,615.4 739.2,619.1 736.2,622.9 733.3,626.8 730.5,630.8 727.9,634.9 725.4,639.0 723.1,643.3 720.9,647.6 718.8,652.0 716.9,656.4 715.1,660.9 713.5,665.5 712.1,670.1 710.8,674.7 709.6,679.4 708.7,684.1 707.8,688.8 707.2,693.6 706.7,698.4 706.4,703.1 706.2,707.9 706.2,712.7 706.3,717.4 706.7,722.2 707.2,726.9 707.8,731.6 708.6,736.2 709.6,740.8 710.7,745.4 712.0,749.9 713.4,754.4 715.0,758.8 716.8,763.1 718.7,767.4 720.8,771.5 722.9,775.6 725.3,779.6 727.8,783.5 730.4,787.4 733.1,791.1 736.0,794.7 739.0,798.2 742.2,801.5 745.4,804.8 748.8,807.9 752.3,810.9 755.8,813.8 759.5,816.5 763.3,819.1"/>
<polygon fill="url(#ghole)" points="1237.0,534.7 1239.4,536.5 1241.7,538.4 1243.7,540.6 1245.6,543.0 1247.2,545.5 1248.7,548.2 1249.8,551.0 1250.8,553.9 1251.4,557.0 1251.8,560.0 1252.0,563.1 1251.8,566.2 1251.5,569.3 1250.8,572.4 1249.9,575.4 1248.7,578.4 1247.3,581.2 1245.7,583.9 1243.8,586.5 1241.8,588.9 1239.5,591.1 1237.1,593.1 1234.6,595.0 1231.9,596.5 1229.0,597.9 1226.1,599.0 1223.2,599.8 1220.1,600.4 1217.1,600.7 1214.0,600.7 1211.0,600.5 1208.0,599.9 1205.1,599.2 1202.3,598.1 1199.6,596.8 1197.0,595.3 1194.6,593.5 1192.3,591.6 1190.3,589.4 1188.4,587.0 1186.8,584.5 1185.3,581.8 1184.2,579.0 1183.2,576.1 1182.6,573.0 1182.2,570.0 1182.0,566.9 1182.2,563.8 1182.5,560.7 1183.2,557.6 1184.1,554.6 1185.3,551.6 1186.7,548.8 1188.3,546.1 1190.2,543.5 1192.2,541.1 1194.5,538.9 1196.9,536.9 1199.4,535.0 1202.1,533.5 1205.0,532.1 1207.9,531.0 1210.8,530.2 1213.9,529.6 1216.9,529.3 1220.0,529.3 1223.0,529.5 1226.0,530.1 1228.9,530.8 1231.7,531.9 1234.4,533.2 1237.0,534.7"/>
</svg>
<div class="hl" style="left:272px;top:1107px;width:1648px;background:#9c9cac"></div>

<!-- bottom tabs -->
<div class="tab" style="left:274px;width:166px"></div>
<div class="tab" style="left:440px;width:132px"></div>
<div class="tab" style="left:572px;width:137px"></div>
<div class="tab" style="left:709px;width:135px"></div>
<div class="hl" style="left:274px;top:1128px;width:570px;background:#dcdcdc"></div>
<div class="tab" style="left:844px;top:1107px;height:24px;width:139px;background:#fff"></div>
<div class="txt" style="left:304px;top:1112px;font-size:11px">Стартовая страница</div>
<div class="txt" style="left:472px;top:1112px;font-size:11px">Unnamed : 1*</div>
<div class="txt" style="left:603px;top:1112px;font-size:11px">Unnamed1 : 1*</div>
<div class="txt" style="left:740px;top:1112px;font-size:11px">Unnamed2 : 1*</div>
<div class="txt" style="left:877px;top:1113px;font-size:11px">Unnamed3 : 1*</div>
<svg width="1920" height="1135" viewBox="0 0 1920 1135" style="position:absolute;left:0;top:0;pointer-events:none">
<g transform="translate(2,2.5) scale(0.95)"><path d="M0.5,0.5 H10 V4 H4.5 V6.5 H8.5 V10 H4.5 V15.5 H0.5 Z" fill="#d42020" stroke="#901010" stroke-width="0.5"/><path d="M0.5,0.5 L2,2 V15.5 H0.5 Z" fill="#a01010"/><g transform="translate(11.5,11)"><path d="M-1,-5 h2 l0.5,1.6 l1.5,-1 l1.4,1.4 l-1,1.5 l1.6,0.5 v2 l-1.6,0.5 l1,1.5 l-1.4,1.4 l-1.5,-1 l-0.5,1.6 h-2 l-0.5,-1.6 l-1.5,1 l-1.4,-1.4 l1,-1.5 l-1.6,-0.5 v-2 l1.6,-0.5 l-1,-1.5 l1.4,-1.4 l1.5,1 z" fill="#4a6fb0" stroke="#2a4a80" stroke-width="0.4"/><circle r="1.6" fill="#e8eef8"/></g></g>
<rect x="1799" y="10" width="10" height="1" fill="#111"/>
<rect x="1844.5" y="7.5" width="7.5" height="7.5" fill="none" stroke="#111"/><path d="M1846.5,7.5 V5.5 H1854.5 V13 H1852" fill="none" stroke="#111"/>
<path d="M1890,5 L1900,15 M1900,5 L1890,15" stroke="#111" stroke-width="1.1"/>
<rect x="239.5" y="121.5" width="5" height="5" fill="none" stroke="#000" stroke-width="1.2"/><path d="M241.5,121 V118.5 H247 V124 H245" fill="none" stroke="#000" stroke-width="1.2"/>
<path d="M255.5,119.5 L262,126 M262,119.5 L255.5,126" stroke="#000" stroke-width="1.5"/>
<path d="M8.5,203.5 L12,207 L15.5,203.5" fill="none" stroke="#333" stroke-width="1.4"/>
<rect x="27.5" y="199.5" width="13" height="14" rx="1" fill="#f0f0f0" stroke="#b0b0b0"/>
<circle cx="37" cy="203.5" r="3" fill="#e02020"/><path d="M30,206 L34,203.5 L38,206 V210.5 L34,213 L30,210.5 Z" fill="#3a70c0" stroke="#204a90" stroke-width="0.5"/>
<path d="M48,219 L52,217 L55,222 L58,217 L62,219 V230 L58,228 L55,232 L52,228 L48,230 Z" fill="#6cc040" stroke="#3a8a20" stroke-width="0.6"/>
<g transform="translate(284,1109.5) scale(0.95)"><path d="M0.5,0.5 H10 V4 H4.5 V6.5 H8.5 V10 H4.5 V15.5 H0.5 Z" fill="#d42020" stroke="#901010" stroke-width="0.5"/><path d="M0.5,0.5 L2,2 V15.5 H0.5 Z" fill="#a01010"/><g transform="translate(11.5,11)"><path d="M-1,-5 h2 l0.5,1.6 l1.5,-1 l1.4,1.4 l-1,1.5 l1.6,0.5 v2 l-1.6,0.5 l1,1.5 l-1.4,1.4 l-1.5,-1 l-0.5,1.6 h-2 l-0.5,-1.6 l-1.5,1 l-1.4,-1.4 l1,-1.5 l-1.6,-0.5 v-2 l1.6,-0.5 l-1,-1.5 l1.4,-1.4 l1.5,1 z" fill="#4a6fb0" stroke="#2a4a80" stroke-width="0.4"/><circle r="1.6" fill="#e8eef8"/></g></g>
<rect x="414.0" y="1111.5" width="13" height="13" rx="1.5" fill="#c8c8c8" stroke="#a8a8a8"/>
<path d="M417.5,1115.0 L423.5,1121.0 M423.5,1115.0 L417.5,1121.0" stroke="#fff" stroke-width="1.8"/>
<g transform="translate(453,1109.5) scale(0.95)"><path d="M0.5,0.5 H10 V4 H4.5 V6.5 H8.5 V10 H4.5 V15.5 H0.5 Z" fill="#d42020" stroke="#901010" stroke-width="0.5"/><path d="M0.5,0.5 L2,2 V15.5 H0.5 Z" fill="#a01010"/><g transform="translate(11.5,11)"><path d="M-1,-5 h2 l0.5,1.6 l1.5,-1 l1.4,1.4 l-1,1.5 l1.6,0.5 v2 l-1.6,0.5 l1,1.5 l-1.4,1.4 l-1.5,-1 l-0.5,1.6 h-2 l-0.5,-1.6 l-1.5,1 l-1.4,-1.4 l1,-1.5 l-1.6,-0.5 v-2 l1.6,-0.5 l-1,-1.5 l1.4,-1.4 l1.5,1 z" fill="#4a6fb0" stroke="#2a4a80" stroke-width="0.4"/><circle r="1.6" fill="#e8eef8"/></g></g>
<rect x="545.5" y="1111.5" width="13" height="13" rx="1.5" fill="#c8c8c8" stroke="#a8a8a8"/>
<path d="M549,1115.0 L555,1121.0 M555,1115.0 L549,1121.0" stroke="#fff" stroke-width="1.8"/>
<g transform="translate(584,1109.5) scale(0.95)"><path d="M0.5,0.5 H10 V4 H4.5 V6.5 H8.5 V10 H4.5 V15.5 H0.5 Z" fill="#d42020" stroke="#901010" stroke-width="0.5"/><path d="M0.5,0.5 L2,2 V15.5 H0.5 Z" fill="#a01010"/><g transform="translate(11.5,11)"><path d="M-1,-5 h2 l0.5,1.6 l1.5,-1 l1.4,1.4 l-1,1.5 l1.6,0.5 v2 l-1.6,0.5 l1,1.5 l-1.4,1.4 l-1.5,-1 l-0.5,1.6 h-2 l-0.5,-1.6 l-1.5,1 l-1.4,-1.4 l1,-1.5 l-1.6,-0.5 v-2 l1.6,-0.5 l-1,-1.5 l1.4,-1.4 l1.5,1 z" fill="#4a6fb0" stroke="#2a4a80" stroke-width="0.4"/><circle r="1.6" fill="#e8eef8"/></g></g>
<rect x="681.5" y="1111.5" width="13" height="13" rx="1.5" fill="#c8c8c8" stroke="#a8a8a8"/>
<path d="M685,1115.0 L691,1121.0 M691,1115.0 L685,1121.0" stroke="#fff" stroke-width="1.8"/>
<g transform="translate(721,1109.5) scale(0.95)"><path d="M0.5,0.5 H10 V4 H4.5 V6.5 H8.5 V10 H4.5 V15.5 H0.5 Z" fill="#d42020" stroke="#901010" stroke-width="0.5"/><path d="M0.5,0.5 L2,2 V15.5 H0.5 Z" fill="#a01010"/><g transform="translate(11.5,11)"><path d="M-1,-5 h2 l0.5,1.6 l1.5,-1 l1.4,1.4 l-1,1.5 l1.6,0.5 v2 l-1.6,0.5 l1,1.5 l-1.4,1.4 l-1.5,-1 l-0.5,1.6 h-2 l-0.5,-1.6 l-1.5,1 l-1.4,-1.4 l1,-1.5 l-1.6,-0.5 v-2 l1.6,-0.5 l-1,-1.5 l1.4,-1.4 l1.5,1 z" fill="#4a6fb0" stroke="#2a4a80" stroke-width="0.4"/><circle r="1.6" fill="#e8eef8"/></g></g>
<rect x="818.5" y="1111.5" width="13" height="13" rx="1.5" fill="#c8c8c8" stroke="#a8a8a8"/>
<path d="M822,1115.0 L828,1121.0 M828,1115.0 L822,1121.0" stroke="#fff" stroke-width="1.8"/>
<g transform="translate(857.5,1110.5) scale(0.95)"><path d="M0.5,0.5 H10 V4 H4.5 V6.5 H8.5 V10 H4.5 V15.5 H0.5 Z" fill="#d42020" stroke="#901010" stroke-width="0.5"/><path d="M0.5,0.5 L2,2 V15.5 H0.5 Z" fill="#a01010"/><g transform="translate(11.5,11)"><path d="M-1,-5 h2 l0.5,1.6 l1.5,-1 l1.4,1.4 l-1,1.5 l1.6,0.5 v2 l-1.6,0.5 l1,1.5 l-1.4,1.4 l-1.5,-1 l-0.5,1.6 h-2 l-0.5,-1.6 l-1.5,1 l-1.4,-1.4 l1,-1.5 l-1.6,-0.5 v-2 l1.6,-0.5 l-1,-1.5 l1.4,-1.4 l1.5,1 z" fill="#4a6fb0" stroke="#2a4a80" stroke-width="0.4"/><circle r="1.6" fill="#e8eef8"/></g></g>
<rect x="955.5" y="1112.5" width="13" height="13" rx="1.5" fill="#e36a4e" stroke="#c85038"/>
<path d="M959,1116.0 L965,1122.0 M965,1116.0 L959,1122.0" stroke="#fff" stroke-width="1.8"/>
<path d="M2.5,1112.5 C4,1114 5,1124 9,1125.5 H37 C41,1124 42,1114 44,1112" fill="#ececec" stroke="#333" stroke-width="0.9"/>
<path d="M44,1112 C46,1114 48,1126 53,1126.5 H101 C105,1126 106,1114 108.5,1112" fill="#fff" stroke="#333" stroke-width="0.9"/>
<text x="13.5" y="1123.2" font-family="Liberation Sans" font-size="11" fill="#000">Вид</text><text x="57" y="1124.2" font-family="Liberation Sans" font-size="11" fill="#000">Данные</text>
<path d="M1829,128.9 L1837.3,119.8 L1846.2,128.9 Z" fill="#e2e4ee"/>
<path d="M1828.8,260.8 H1846.4 L1837.6,270 Z" fill="#e2e4ee"/>
<path d="M1771,187 V203 L1762.6,195 Z" fill="#e2e4ee"/>
<path d="M1903.3,185.4 V203.9 L1912.5,194.7 Z" fill="#e2e4ee"/>
<path d="M1815,131 C1804,135 1795,141 1787,149" fill="none" stroke="#e2e4ee" stroke-width="5" stroke-linecap="round"/>
<path d="M1782.9,151.4 L1783.7,142 L1792.5,150.8 Z" fill="#e2e4ee"/>
<path d="M1860,131 C1871,135 1880,141 1888,149" fill="none" stroke="#e2e4ee" stroke-width="5" stroke-linecap="round"/>
<path d="M1891.1,151.4 L1890.3,142 L1881.5,150.8 Z" fill="#e2e4ee"/>
<path d="M1806,153.5 H1862 C1868,153.5 1870,157 1870,163 V220 C1870,226 1866,227.5 1860,227.5 H1802 C1797,227.5 1794.5,223 1794.5,218 V170 C1794.5,164 1798,161 1803,160 Z" fill="#eef0f6"/>
<path d="M1806,153.5 H1862 C1866,153.5 1868,156 1866,159 L1856,160 H1803 C1799,160 1801,154 1806,153.5 Z" fill="#dcdfe8"/>
<path d="M1856,160 L1866,159 C1869,160 1870,163 1870,166 V218 C1870,224 1866,226 1862,226 L1855,218 Z" fill="#dfe2ea"/>
<rect x="1800.5" y="160.5" width="54.5" height="57.5" rx="6" fill="#f6f7fb"/>
<path d="M1808,166 L1818,175 M1828,176 H1858" stroke="#9aa0aa" stroke-width="1.3"/><rect x="1855" y="174" width="3" height="3" fill="#333c60"/>
<path d="M1820.5,185 V214" stroke="#a8d8a8" stroke-width="0.9"/>
<path d="M1867.5,180 V193 M1867.5,204 V214" stroke="#222" stroke-width="0.8" stroke-dasharray="1.5,1.5"/>
<text x="1813" y="195.5" font-family="Liberation Sans" font-size="17" fill="#000">Top</text>
<path d="M1797,225 H1818" stroke="#1020d0" stroke-width="1.1"/><path d="M1826,224.8 H1862" stroke="#d02020" stroke-width="1.1"/>
<text x="1787" y="228.5" font-family="Liberation Sans" font-size="8" fill="#1020e0">Z</text><text x="1876" y="228.5" font-family="Liberation Sans" font-size="8" fill="#c02030">X</text>
<path d="M1864,245.5 L1874.5,241.5 L1885.5,245.5 V259 L1874.5,263.3 L1864,259 Z" fill="#d8d6d2"/>
<path d="M1864,245.5 L1874.5,241.5 L1885.5,245.5 L1875,249.5 Z" fill="#f2f0ec"/><path d="M1875,249.5 L1885.5,245.5 V259 L1875,263.3 Z" fill="#e8e6e2"/>
<path d="M1890.7,249.5 H1903.3 L1897,255.8 Z" fill="#3a3a50"/>
<path d="M1870,1057 V1031" stroke="#2a8a2a" stroke-width="1.6"/><path d="M1871,1025.6 L1867.5,1035 H1874.5 Z" fill="#2a8a2a"/>
<path d="M1870,1057 H1898" stroke="#902020" stroke-width="1.6"/><path d="M1905.6,1057 L1894,1053.5 V1060.5 Z" fill="#902020"/>
<path d="M1870,1057 L1861,1051" stroke="#1a1a90" stroke-width="1.2"/><path d="M1858,1049.5 L1864,1051 L1861,1056 Z" fill="#1a1a90" stroke="#1a1a90" stroke-width="1.5"/>
<text x="1873.5" y="1027" font-family="Liberation Sans" font-size="8" fill="#000">Y</text>
<text x="1908" y="1057.5" font-family="Liberation Sans" font-size="8" fill="#000">X</text>
<text x="1859" y="1049" font-family="Liberation Sans" font-size="8" fill="#000">Z</text>
</svg>
</body></html>
